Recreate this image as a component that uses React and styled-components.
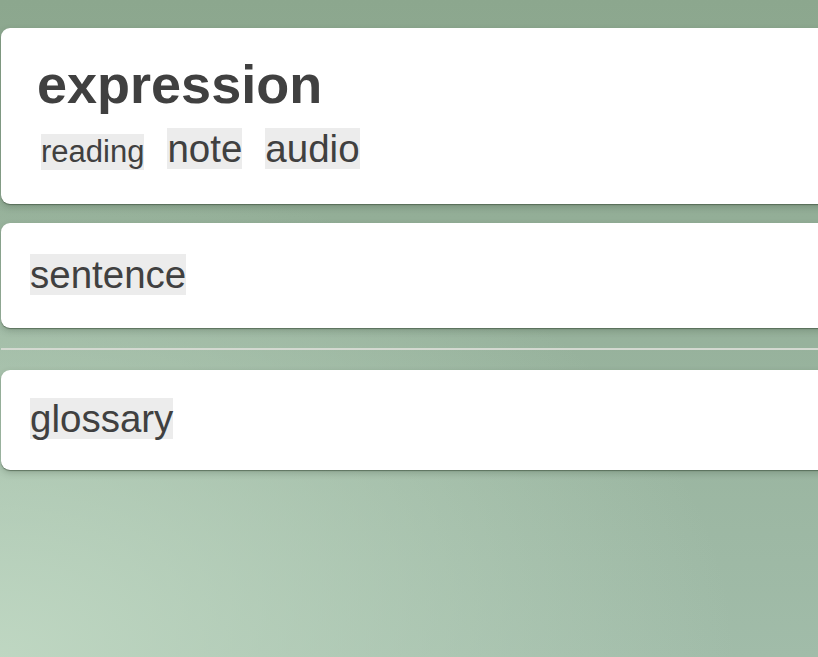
import React from 'react'
import styled, { createGlobalStyle } from 'styled-components'

const GlobalStyle = createGlobalStyle`
    html, body {
        margin: 0;
        padding: 0;
        min-height: 100%;
    }
    body {
        min-height: 657px;
        overflow: hidden;
        font-family: "Liberation Sans", Arial, sans-serif;
        color: #404040;
        background:
            radial-gradient(ellipse 90% 75% at 0% 100%, rgba(192, 216, 195, 0.95) 0%, rgba(192, 216, 195, 0) 100%),
            linear-gradient(to bottom, #8ca78e 0%, #a1bca9 100%);
        background-attachment: fixed;
    }
`

const Page = styled.div`
    display: flex;
    flex-direction: column;
    padding-top: 28px;
    padding-left: 1px;
`

const Card = styled.section`
    background: #ffffff;
    border-radius: 9px;
    margin-right: -24px;
    margin-top: ${p => p.$top || 0}px;
    padding: ${p => p.$pad};
    box-shadow: 0 1px 1px rgba(60, 80, 60, 0.6), 0 3px 7px rgba(40, 60, 40, 0.24);
`

const Title = styled.h1`
    margin: 0;
    font-size: 54px;
    line-height: 61px;
    font-weight: 700;
`

const TagRow = styled.div`
    display: flex;
    align-items: baseline;
    gap: 23px;
    margin-top: 13px;
    padding-left: 4px;
`

const Tag = styled.span`
    display: inline-block;
    background: #ececec;
    font-size: ${p => p.$size}px;
    line-height: ${p => p.$box}px;
`

const Field = styled.span`
    display: inline-block;
    background: #ececec;
    font-size: 38.5px;
    line-height: 41px;
`

const Divider = styled.hr`
    border: none;
    height: 2px;
    background: #d4d9d1;
    margin: 20px -20px 20px 0;
`

const App = () => {
    return (
        <>
            <GlobalStyle />
            <Page>
                <Card $pad="26px 36px 34px">
                    <Title>expression</Title>
                    <TagRow>
                        <Tag $size={31} $box={36}>reading</Tag>
                        <Tag $size={38.5} $box={41}>note</Tag>
                        <Tag $size={38.5} $box={41}>audio</Tag>
                    </TagRow>
                </Card>
                <Card $top={19} $pad="31px 29px 33px">
                    <Field>sentence</Field>
                </Card>
                <Divider />
                <Card $pad="28px 29px 31px">
                    <Field>glossary</Field>
                </Card>
            </Page>
        </>
    )
}

export default App
